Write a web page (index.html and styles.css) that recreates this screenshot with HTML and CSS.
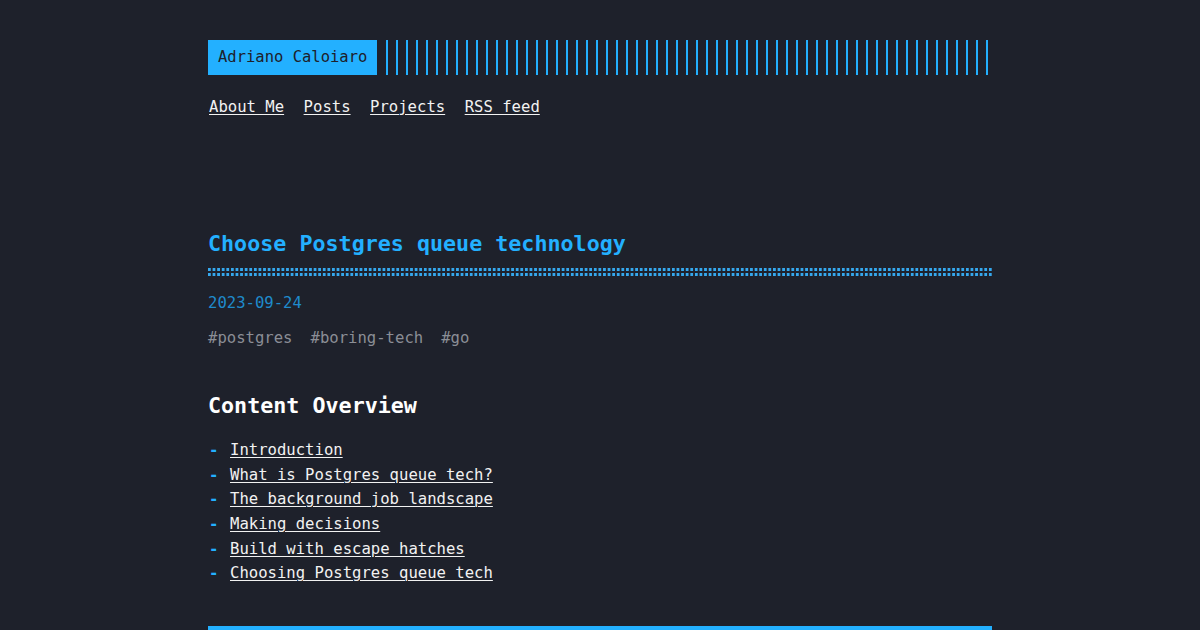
FILE: index.html
```html
<!DOCTYPE html>
<html lang="en">
<head>
<meta charset="utf-8">
<title>Choose Postgres queue technology</title>
<link rel="stylesheet" href="styles.css">
</head>
<body>
<div class="container">
  <header class="header">
    <div class="logo-row">
      <a class="logo" href="#">Adriano Caloiaro</a>
      <div class="bars"></div>
    </div>
    <nav class="menu">
      <a href="#">About Me</a>
      <a href="#">Posts</a>
      <a href="#">Projects</a>
      <a href="#">RSS feed</a>
    </nav>
  </header>
  <main class="post">
    <h1 class="post-title">Choose Postgres queue technology</h1>
    <div class="dots"></div>
    <div class="post-date">2023-09-24</div>
    <div class="post-tags">
      <a href="#">#postgres</a>
      <a href="#">#boring-tech</a>
      <a href="#">#go</a>
    </div>
    <h2 class="toc-title">Content Overview</h2>
    <ul class="toc">
      <li><a href="#">Introduction</a></li>
      <li><a href="#">What is Postgres queue tech?</a></li>
      <li><a href="#">The background job landscape</a></li>
      <li><a href="#">Making decisions</a></li>
      <li><a href="#">Build with escape hatches</a></li>
      <li><a href="#">Choosing Postgres queue tech</a></li>
    </ul>
    <div class="bottom-bar"></div>
  </main>
</div>
</body>
</html>
```
FILE: styles.css
```css
html, body {
  margin: 0;
  padding: 0;
  background: #1e212b;
  height: 100%;
  overflow: hidden;
}
body {
  font-family: "DejaVu Sans Mono", "Liberation Mono", monospace;
  font-size: 15.6px;
  line-height: 24.64px;
  color: #f2f2f2;
}
a {
  color: #f2f2f2;
  text-decoration: underline;
  text-decoration-thickness: 1px;
  text-underline-offset: 2px;
}
.container {
  width: 784px;
  margin: 0 auto;
  padding-top: 40px;
}
.logo-row {
  display: flex;
  height: 35px;
}
.logo {
  display: block;
  background: #23b0ff;
  color: #1e212b;
  text-decoration: none;
  font-size: 15.5px;
  line-height: 35px;
  padding: 0 10px;
  white-space: nowrap;
}
.bars {
  flex: 1;
  margin-left: 9px;
  background: repeating-linear-gradient(90deg, #23b0ff 0, #23b0ff 2px, transparent 2px, transparent 10px);
}
.menu {
  display: flex;
  gap: 19.5px;
  margin-top: 19.6px;
  padding-left: 1px;
}
.post-title {
  margin: 110.4px 0 0;
  font-size: 21.7px;
  line-height: 28px;
  font-weight: bold;
  color: #23b0ff;
}
.dots {
  margin-top: 10.3px;
  height: 8px;
  background-image:
    linear-gradient(90deg, #35a8ee 0, #35a8ee 3px, transparent 3px),
    linear-gradient(90deg, #35a8ee 0, #35a8ee 3px, transparent 3px);
  background-size: 4.6px 3px, 4.6px 3px;
  background-position: 0 0, 0 5px;
  background-repeat: repeat-x;
}
.post-date {
  margin-top: 14.8px;
  color: #1f8bcc;
}
.post-tags {
  margin-top: 10.6px;
  display: flex;
  gap: 18px;
}
.post-tags a {
  color: #8b8e96;
  text-decoration: none;
}
.toc-title {
  margin: 41px 0 0;
  font-size: 21.7px;
  line-height: 28px;
  font-weight: bold;
  color: #ffffff;
}
.toc {
  list-style: none;
  margin: 18.6px 0 0;
  padding: 0;
}
.toc li {
  display: flex;
  line-height: 24.6px;
}
.toc li::before {
  content: "-";
  color: #23b0ff;
  font-weight: bold;
  width: 22px;
  flex: none;
  padding-left: 1px;
  box-sizing: border-box;
}
.bottom-bar {
  margin-top: 40px;
  height: 10px;
  background: #23b0ff;
}
```
